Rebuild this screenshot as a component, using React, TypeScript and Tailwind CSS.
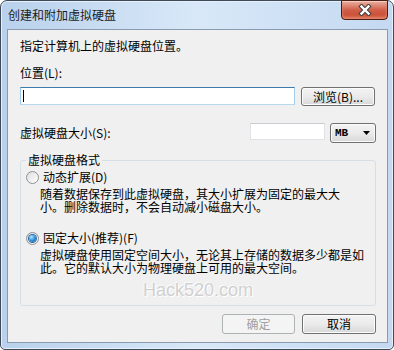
function Radio({ checked }: { checked?: boolean }) {
  return (
    <span className="flex items-center justify-center w-[13px] h-[13px] shrink-0 rounded-full border border-[#8f9194] bg-gradient-to-br from-[#dcdcdc] to-[#ffffff]">
      {checked ? (
        <span className="w-[7px] h-[7px] rounded-full bg-[radial-gradient(circle_at_35%_30%,#b9e6ff_0%,#3c9be0_45%,#0b4f93_100%)] shadow-[0_0_0_1px_#2c6aa8]" />
      ) : (
        <span className="w-[9px] h-[9px] rounded-full bg-gradient-to-br from-[#e2e2e2] to-[#fbfbfb]" />
      )}
    </span>
  )
}

export default function App() {
  return (
    <div className="w-[394px] h-[350px] bg-white text-[12px] text-black font-['Noto_Sans_CJK_SC',sans-serif]">
      <div className="flex flex-col w-full h-full rounded-t-[7px] rounded-b-[5px] border border-[#3e4a58] bg-gradient-to-r from-[#b9d1ec] via-[#d8e8f8] to-[#c4d9f1] shadow-[inset_0_0_0_1px_#e6f0fb]">
        {/* title bar */}
        <div className="flex items-start h-[28px] shrink-0">
          <div className="pl-[7px] pt-[6px] leading-[16px] text-[#1b1b1b]">创建和附加虚拟硬盘</div>
          <div className="ml-auto mr-[5px] -mt-px w-[47px] h-[20px] flex items-center justify-center rounded-b-[4px] border border-[#4b1d15] bg-gradient-to-b from-[#eab0a2] via-[#cf5e48] to-[#c7452c] shadow-[inset_0_1px_0_#f4cfc6,inset_0_-2px_3px_#e58a70]">
            <svg width="14" height="12" viewBox="0 0 14 12">
              <path d="M3.5 2.5 L10.5 9.5 M10.5 2.5 L3.5 9.5" stroke="#3f3f3f" strokeWidth="4.4" strokeLinecap="square" />
              <path d="M3.5 2.5 L10.5 9.5 M10.5 2.5 L3.5 9.5" stroke="#ffffff" strokeWidth="2.4" strokeLinecap="square" />
            </svg>
          </div>
        </div>

        {/* client area */}
        <div className="flex-1 flex flex-col ml-[6px] mr-[5px] mb-[6px] border border-[#8a9bb0] bg-[#f0f0f0] pl-[12px] pr-[11px] leading-[16px]">
          <div className="mt-[8px]">指定计算机上的虚拟硬盘位置。</div>
          <div className="mt-[11px]">位置(L):</div>

          <div className="mt-[6px] flex items-start">
            <div className="w-[275px] h-[18px] flex items-center bg-white border border-[#a4c9e3] border-t-[#3d7bad] border-b-[#b7d9ed]">
              <span className="ml-[2px] w-px h-[12px] bg-black" />
            </div>
            <button className="ml-[6px] w-[74px] h-[19px] flex items-center justify-center rounded-[3px] border border-[#707070] bg-gradient-to-b from-[#f3f3f3] via-[#ebebeb] to-[#d8d8d8] shadow-[inset_0_0_0_1px_#fcfcfc] leading-[16px]">
              浏览(B)...
            </button>
          </div>

          <div className="mt-[17px] flex items-start">
            <div className="mt-[2px]">虚拟硬盘大小(S):</div>
            <div className="ml-auto w-[75px] h-[17px] bg-white border border-[#dfe2e7] border-t-[#c9ccd1]" />
            <div className="ml-[5px] w-[46px] h-[20px] flex items-center pl-[4px] pr-[5px] rounded-[3px] border border-[#707070] bg-gradient-to-b from-[#f3f3f3] via-[#ebebeb] to-[#d8d8d8] shadow-[inset_0_0_0_1px_#fcfcfc]">
              <span className="font-['Liberation_Mono',monospace] text-[11px] font-bold leading-[14px]">MB</span>
              <svg className="ml-auto" width="7" height="4" viewBox="0 0 7 4">
                <path d="M0 0 H7 L3.5 4 Z" fill="#000" />
              </svg>
            </div>
          </div>

          <fieldset className="mt-[9px] rounded-[3px] border border-[#d5dfe5] pl-[5px] pr-[5px] pb-[5px]">
            <legend className="px-[2px] leading-[16px]">虚拟硬盘格式</legend>

            <div className="mt-[1px] flex items-center h-[16px]">
              <Radio />
              <span className="ml-[4px]">动态扩展(D)</span>
            </div>
            <div className="mt-[2px] pl-[14px] leading-[13px] whitespace-nowrap">
              <div>随着数据保存到此虚拟硬盘，其大小扩展为固定的最大大</div>
              <div>小。删除数据时，不会自动减小磁盘大小。</div>
            </div>

            <div className="mt-[17px] flex items-center h-[16px]">
              <Radio checked />
              <span className="ml-[4px]">固定大小(推荐)(F)</span>
            </div>
            <div className="mt-[2px] pl-[14px] leading-[13px] whitespace-nowrap">
              <div>虚拟硬盘使用固定空间大小，无论其上存储的数据多少都是如</div>
              <div>此。它的默认大小为物理硬盘上可用的最大空间。</div>
            </div>

            <div className="mt-[6px] h-[20px] text-center font-['Liberation_Sans',sans-serif] text-[18px] leading-[20px] text-[#d0d0d0] [text-shadow:1px_1px_0_#ffffff,-1px_-1px_0_#fafafa]">
              Hack520.com
            </div>
          </fieldset>

          <div className="mt-[8px] flex justify-end gap-[7px]">
            <button className="w-[73px] h-[20px] flex items-center justify-center rounded-[3px] border border-[#adb2b5] bg-[#f4f4f4] text-[#a0a0a0] leading-[16px]">
              确定
            </button>
            <button className="w-[74px] h-[20px] flex items-center justify-center rounded-[3px] border border-[#707070] bg-gradient-to-b from-[#f3f3f3] via-[#ebebeb] to-[#d8d8d8] shadow-[inset_0_0_0_1px_#fcfcfc] leading-[16px]">
              取消
            </button>
          </div>
        </div>
      </div>
    </div>
  )
}
